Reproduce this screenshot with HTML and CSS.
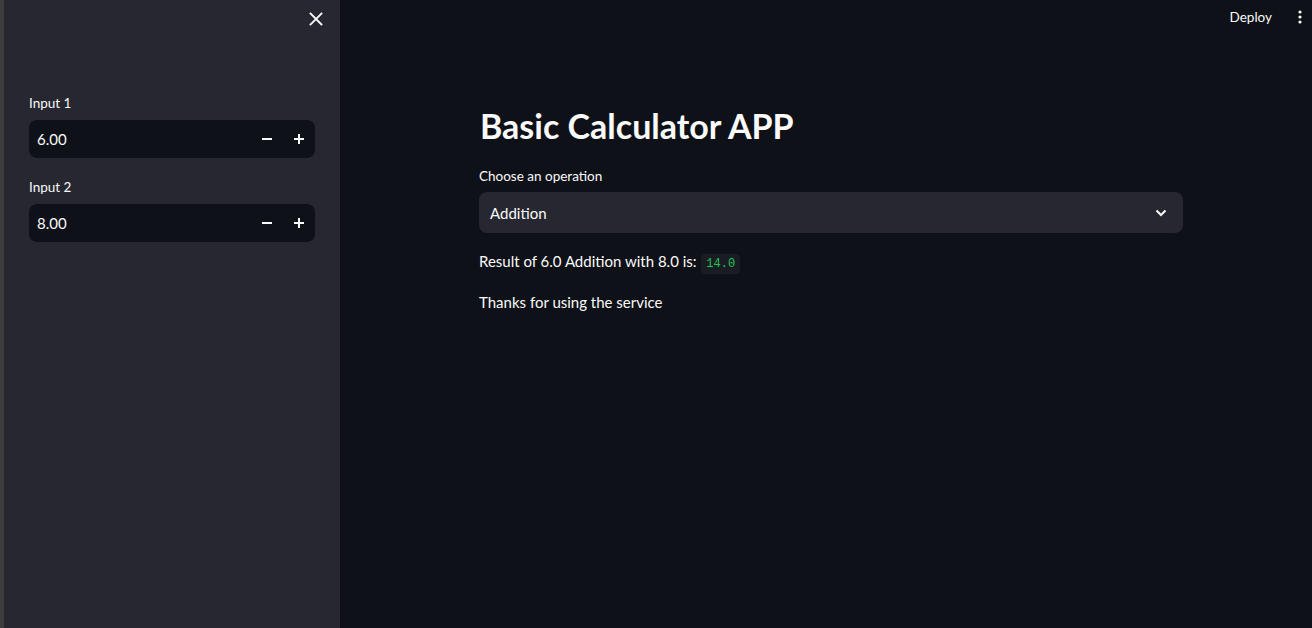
FILE: index.html
```html
<!DOCTYPE html>
<html>
<head>
<meta charset="utf-8">
<link rel="stylesheet" href="styles.css">
</head>
<body>
<div class="app">
  <aside class="sidebar">
    <div class="side-top">
      <button class="close" aria-label="Close">
        <svg width="14" height="14" viewBox="0 0 14 14"><path d="M1.5 1.5L12.5 12.5M12.5 1.5L1.5 12.5" stroke="#fafafa" stroke-width="1.8" stroke-linecap="square"/></svg>
      </button>
    </div>
    <div class="side-body">
      <div class="field">
        <label class="label">Input 1</label>
        <div class="numinput">
          <span class="num">6.00</span>
          <span class="step">
            <svg width="10" height="10" viewBox="0 0 10 10"><path d="M0 5H10" stroke="#fafafa" stroke-width="2"/></svg>
          </span>
          <span class="step">
            <svg width="10" height="10" viewBox="0 0 10 10"><path d="M0 5H10M5 0V10" stroke="#fafafa" stroke-width="2"/></svg>
          </span>
        </div>
      </div>
      <div class="field">
        <label class="label">Input 2</label>
        <div class="numinput">
          <span class="num">8.00</span>
          <span class="step">
            <svg width="10" height="10" viewBox="0 0 10 10"><path d="M0 5H10" stroke="#fafafa" stroke-width="2"/></svg>
          </span>
          <span class="step">
            <svg width="10" height="10" viewBox="0 0 10 10"><path d="M0 5H10M5 0V10" stroke="#fafafa" stroke-width="2"/></svg>
          </span>
        </div>
      </div>
    </div>
  </aside>
  <main class="main">
    <header class="topbar">
      <span class="deploy">Deploy</span>
      <span class="kebab">
        <svg width="4" height="14" viewBox="0 0 4 14"><circle cx="2" cy="2" r="1.6" fill="#fafafa"/><circle cx="2" cy="7" r="1.6" fill="#fafafa"/><circle cx="2" cy="12" r="1.6" fill="#fafafa"/></svg>
      </span>
    </header>
    <section class="content">
      <h1 class="title">Basic Calculator APP</h1>
      <label class="label">Choose an operation</label>
      <div class="select">
        <span>Addition</span>
        <svg width="12" height="8" viewBox="0 0 12 8"><path d="M1.5 1.5L6 6L10.5 1.5" stroke="#fafafa" stroke-width="2" fill="none"/></svg>
      </div>
      <p class="text">Result of 6.0 Addition with 8.0 is: <code class="code">14.0</code></p>
      <p class="text thanks">Thanks for using the service</p>
    </section>
  </main>
</div>
</body>
</html>
```
FILE: styles.css
```css
* { box-sizing: border-box; }
html, body { margin: 0; padding: 0; height: 100%; }
body {
  background: #0e1117;
  color: #fafafa;
  font-family: "Lato", "Noto Sans", sans-serif;
  font-size: 15px;
  overflow: hidden;
}
.app { display: flex; height: 628px; }
.sidebar {
  width: 340px;
  flex: none;
  background: #262730;
  border-left: 4px solid #3d3d3d;
  display: flex;
  flex-direction: column;
}
.side-top {
  height: 38px;
  display: flex;
  justify-content: flex-end;
  align-items: center;
  padding-right: 17px;
}
.close {
  background: none; border: 0; padding: 0; display: flex; cursor: pointer;
}
.side-body { padding: 55px 25px 0 25px; display: flex; flex-direction: column; gap: 19px; }
.label {
  display: block;
  font-size: 13.5px;
  color: #fafafa;
  line-height: 20px;
  margin-bottom: 6px;
}
.field .label { margin-bottom: 7px; }
.numinput {
  height: 38px;
  background: #0e1117;
  border-radius: 8px;
  display: flex;
  align-items: center;
  padding-left: 8px;
}
.num { flex: 1; font-size: 15px; }
.step { width: 32px; height: 38px; display: flex; align-items: center; justify-content: center; }
.main { flex: 1; display: flex; flex-direction: column; }
.topbar {
  height: 34px;
  display: flex;
  justify-content: flex-end;
  align-items: center;
  gap: 26px;
  padding-right: 10px;
}
.deploy { font-size: 13.5px; }
.kebab { display: flex; }
.content {
  width: 704px;
  margin-left: 139px;
  padding-top: 70px;
}
.title {
  font-size: 34px;
  font-weight: 700;
  margin: 0 0 18px 1px;
  line-height: 44px;
}
.select {
  height: 41px;
  background: #262730;
  border-radius: 8px;
  display: flex;
  align-items: center;
  justify-content: space-between;
  padding: 0 16px 0 11px;
  font-size: 15px;
}
.text { margin: 17px 0 0 0; font-size: 15px; line-height: 22px; }
.thanks { margin-top: 16px; }
.code {
  font-family: "Liberation Mono", "DejaVu Sans Mono", monospace;
  font-size: 12px;
  color: #21c354;
  background: #1a1c24;
  border-radius: 4px;
  padding: 3px 5px;
  margin-left: 1px;
}
```
